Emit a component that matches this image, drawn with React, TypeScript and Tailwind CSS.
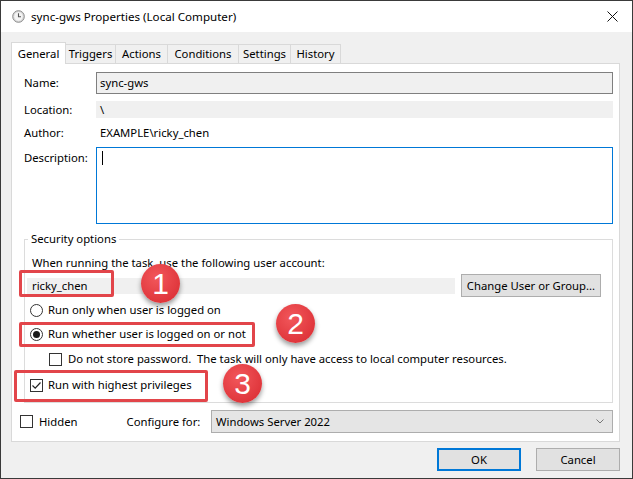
function Radio({ checked }: { checked?: boolean }) {
  return (
    <span className="flex h-[13px] w-[13px] shrink-0 items-center justify-center rounded-full border border-[#333333] bg-white">
      {checked && <span className="h-[7px] w-[7px] rounded-full bg-[#1a1a1a]" />}
    </span>
  );
}

function Check({ checked }: { checked?: boolean }) {
  return (
    <span className="flex h-[13px] w-[13px] shrink-0 items-center justify-center border border-[#333333] bg-white">
      {checked && (
        <svg width="11" height="11" viewBox="0 0 11 11" fill="none">
          <path d="M1.5 5.5 L4.2 8.2 L9.5 2.5" stroke="#222" strokeWidth="1.2" />
        </svg>
      )}
    </span>
  );
}

function Tab({ label, w, active }: { label: string; w: string; active?: boolean }) {
  if (active) {
    return (
      <div
        className={`relative z-10 -mb-px flex h-[22px] items-center justify-center border border-b-0 border-[#d9d9d9] bg-white ${w}`}
      >
        {label}
      </div>
    );
  }
  return (
    <div className={`flex h-[19px] items-center justify-center border-t border-r border-[#d9d9d9] bg-[#f0f0f0] ${w}`}>
      {label}
    </div>
  );
}

export default function App() {
  return (
    <div className="relative flex h-[479px] w-[633px] flex-col overflow-hidden border border-[#3a3a3a] bg-[#f0f0f0] font-['Noto_Sans',sans-serif] text-[11.3px] leading-[16px] text-black">
      {/* title bar */}
      <div className="flex h-[31px] shrink-0 items-center bg-white pl-[11px] pr-[14px]">
        <svg width="13" height="13" viewBox="0 0 13 13">
          <circle cx="6.5" cy="6.5" r="5.8" fill="#d9d9d9" stroke="#8a8a8a" strokeWidth="1" />
          <circle cx="6.5" cy="6.5" r="4.2" fill="#f4f4f4" />
          <path d="M6.5 3.2 V6.7 H9" stroke="#555" strokeWidth="1.1" fill="none" />
        </svg>
        <span className="ml-[6px] text-[11.6px]">sync-gws Properties (Local Computer)</span>
        <svg className="ml-auto" width="11" height="11" viewBox="0 0 11 11">
          <path d="M0.5 0.5 L10.5 10.5 M10.5 0.5 L0.5 10.5" stroke="#111" strokeWidth="1" />
        </svg>
      </div>

      <div className="flex flex-1 flex-col pl-[10px] pr-[12px]">
        {/* tabs */}
        <div className="mt-[9px] flex h-[22px] items-end">
          <Tab label="General" w="w-[55px]" active />
          <Tab label="Triggers" w="w-[50px]" />
          <Tab label="Actions" w="w-[52px]" />
          <Tab label="Conditions" w="w-[71px]" />
          <Tab label="Settings" w="w-[52px]" />
          <Tab label="History" w="w-[50px]" />
        </div>

        {/* panel */}
        <div className="flex h-[379px] flex-col border border-[#d9d9d9] bg-white pl-[12px] pr-[6px]">
          <div className="mt-[8px] flex items-center">
            <span className="w-[72px]">Name:</span>
            <div className="flex h-[22px] flex-1 items-center border border-[#7f7f7f] bg-[#f0f0f0] pl-[3px]">sync-gws</div>
          </div>
          <div className="mt-[7px] flex items-center">
            <span className="w-[72px]">Location:</span>
            <div className="flex h-[17px] flex-1 items-center bg-[#f0f0f0] pl-[4px]">\</div>
          </div>
          <div className="mt-[7px] flex h-[16px] items-center">
            <span className="w-[72px]">Author:</span>
            <span className="pl-[4px]">EXAMPLE\ricky_chen</span>
          </div>
          <div className="mt-[6px] flex items-start">
            <span className="w-[72px] pt-[3px]">Description:</span>
            <div className="h-[77px] flex-1 border border-[#0078d7] bg-white pl-[5px] pt-[3px]">
              <div className="h-[14px] w-px bg-black" />
            </div>
          </div>

          {/* security options */}
          <fieldset className="mt-[7px] flex flex-col border border-[#dcdcdc] pb-[9px] pl-[2px] pr-[10px]">
            <legend className="ml-[1px] px-[3px]">Security options</legend>
            <div className="mt-[8px] pl-[5px]">When running the task, use the following user account:</div>
            <div className="mt-[3px] flex items-center">
              <div className="flex h-[16px] w-[428px] items-center bg-[#f0f0f0] pl-[5px]">ricky_chen</div>
              <div className="ml-[6px] flex h-[23px] w-[140px] items-center justify-center border border-[#adadad] bg-[#e1e1e1]">
                Change User or Group...
              </div>
            </div>
            <div className="mt-[5px] flex h-[16px] items-center gap-[5px] pl-[3px]">
              <Radio />
              <span>Run only when user is logged on</span>
            </div>
            <div className="mt-[8px] flex h-[16px] items-center gap-[5px] pl-[3px]">
              <Radio checked />
              <span>Run whether user is logged on or not</span>
            </div>
            <div className="mt-[9px] flex h-[16px] items-center gap-[6px] pl-[22px]">
              <Check />
              <span>Do not store password.&nbsp; The task will only have access to local computer resources.</span>
            </div>
            <div className="mt-[10px] flex h-[16px] items-center gap-[5px] pl-[3px]">
              <Check checked />
              <span>Run with highest privileges</span>
            </div>
          </fieldset>

          <div className="-ml-[4px] mt-[7px] flex items-center">
            <Check />
            <span className="ml-[6px]">Hidden</span>
            <span className="ml-[49px] whitespace-nowrap">Configure for:</span>
            <div className="ml-auto flex h-[23px] w-[402px] items-center justify-between border border-[#adadad] bg-[#e5e5e5] pl-[4px] pr-[8px]">
              <span>Windows Server 2022</span>
              <svg width="8" height="5" viewBox="0 0 8 5">
                <path d="M0.5 0.5 L4 4 L7.5 0.5" stroke="#777" strokeWidth="1" fill="none" />
              </svg>
            </div>
          </div>
        </div>

        {/* buttons */}
        <div className="mt-[6px] flex justify-end gap-[15px]">
          <div className="flex h-[23px] w-[84px] items-center justify-center border-2 border-[#0078d7] bg-[#e1e1e1]">OK</div>
          <div className="flex h-[23px] w-[84px] items-center justify-center border border-[#adadad] bg-[#e1e1e1]">Cancel</div>
        </div>
      </div>

      {/* annotations */}
      <div className="pointer-events-none absolute left-[18px] top-[269px] h-[27px] w-[95px] rounded-[2px] border-[3px] border-[#e2454a]" />
      <div className="pointer-events-none absolute left-[18px] top-[321px] h-[25px] w-[236px] rounded-[2px] border-[3px] border-[#e2454a]" />
      <div className="pointer-events-none absolute left-[13px] top-[369px] h-[32px] w-[194px] rounded-[2px] border-[3px] border-[#e2454a]" />

      <div className="absolute left-[140px] top-[263px] flex h-[39px] w-[39px] items-center justify-center rounded-full bg-[radial-gradient(circle_at_40%_35%,#f2575b,#d8292f)] font-['Liberation_Sans',sans-serif] text-[30px] leading-none text-white shadow-[0_3px_5px_rgba(0,0,0,0.4)]">
        1
      </div>
      <div className="absolute left-[275px] top-[303px] flex h-[39px] w-[39px] items-center justify-center rounded-full bg-[radial-gradient(circle_at_40%_35%,#f2575b,#d8292f)] font-['Liberation_Sans',sans-serif] text-[30px] leading-none text-white shadow-[0_3px_5px_rgba(0,0,0,0.4)]">
        2
      </div>
      <div className="absolute left-[222px] top-[363px] flex h-[39px] w-[39px] items-center justify-center rounded-full bg-[radial-gradient(circle_at_40%_35%,#f2575b,#d8292f)] font-['Liberation_Sans',sans-serif] text-[30px] leading-none text-white shadow-[0_3px_5px_rgba(0,0,0,0.4)]">
        3
      </div>
    </div>
  );
}
